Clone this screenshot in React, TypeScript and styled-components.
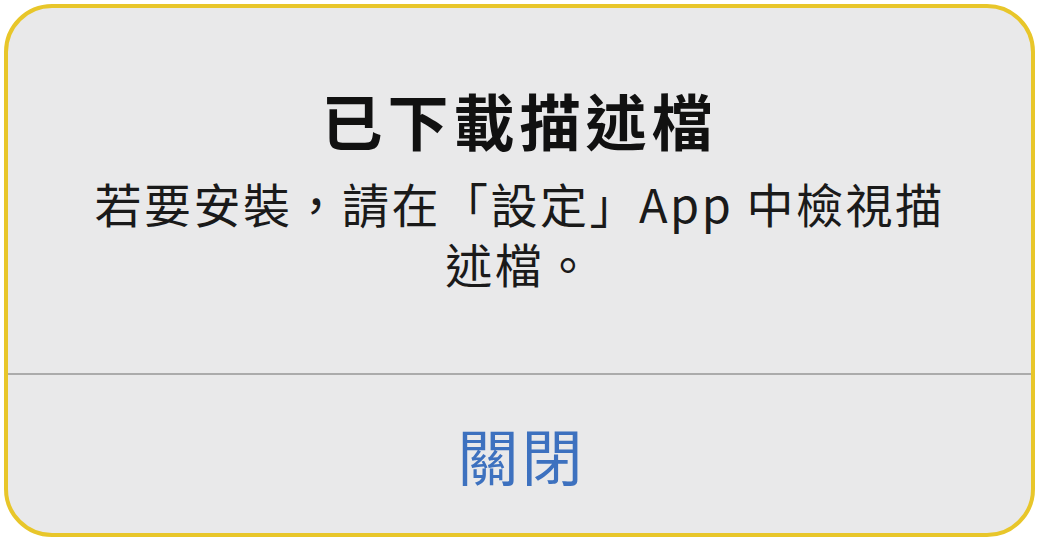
import React from 'react';
import styled, { createGlobalStyle } from 'styled-components';

const GlobalStyle = createGlobalStyle`
  html, body {
    margin: 0;
    padding: 0;
    background: #ffffff;
  }
  body {
    font-family: "Noto Sans CJK TC", "Noto Sans", sans-serif;
  }
`;

const Page = styled.div`
  width: 1041px;
  height: 542px;
  padding: 4px 6px 5px 4px;
  box-sizing: border-box;
`;

const AlertCard = styled.div`
  height: 100%;
  box-sizing: border-box;
  border: 4px solid #e8c62a;
  border-radius: 48px;
  background: #e9e9ea;
  overflow: hidden;
  display: flex;
  flex-direction: column;
`;

const Body = styled.div`
  display: flex;
  flex-direction: column;
  align-items: center;
  padding: 76px 40px 80px;
  border-bottom: 2px solid #ababab;
`;

const Title = styled.h1`
  margin: 0;
  font-size: 61px;
  line-height: 72px;
  font-weight: 700;
  color: #111111;
  letter-spacing: 5px;
`;

const Message = styled.p`
  margin: 17px 0 0;
  max-width: 860px;
  font-size: 47px;
  line-height: 60px;
  font-weight: 400;
  color: #1a1a1a;
  text-align: center;
  letter-spacing: 2.5px;
`;

const ActionButton = styled.button<{ $primary?: boolean }>`
  flex: 1;
  border: none;
  background: transparent;
  color: #3d71bf;
  font-family: inherit;
  font-size: 61px;
  font-weight: ${p => (p.$primary ? 700 : 400)};
  letter-spacing: 3px;
  padding: 0 0 0 4px;
  cursor: pointer;
`;

export default function App() {
  return (
    <>
      <GlobalStyle />
      <Page>
        <AlertCard>
          <Body>
            <Title>已下載描述檔</Title>
            <Message>若要安裝，請在「設定」App 中檢視描述檔。</Message>
          </Body>
          <ActionButton>關閉</ActionButton>
        </AlertCard>
      </Page>
    </>
  );
}
